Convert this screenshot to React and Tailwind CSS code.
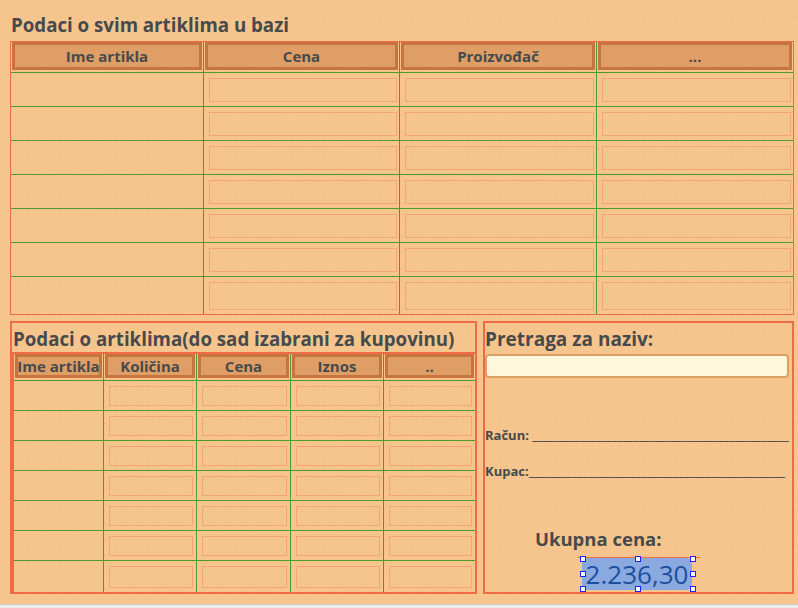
const topCols = [
  { name: 'Ime artikla', w: 'w-[193px]' },
  { name: 'Cena', w: 'w-[196px]' },
  { name: 'Proizvođač', w: 'w-[197px]' },
  { name: '...', w: 'w-[196px]' },
];

const botCols = [
  { name: 'Ime artikla', w: 'w-[90px]' },
  { name: 'Količina', w: 'w-[93px]' },
  { name: 'Cena', w: 'w-[94px]' },
  { name: 'Iznos', w: 'w-[93px]' },
  { name: '..', w: 'w-[91px]' },
];

function HeaderCell({ name, w, last, h }) {
  return (
    <div className={`${w} shrink-0 ${last ? '' : 'border-r'} border-[#4f9a2c] px-[1px] pb-[2px] ${h}`}>
      <div className="flex h-full items-center justify-center whitespace-nowrap border-[3px] border-[#c8743e] bg-[#df9e65] font-bold text-[#474a4c]">
        {name}
      </div>
    </div>
  );
}

function Table({ cols, headerH, headerText, rowH, rows, boxPad }) {
  return (
    <div className="flex h-full flex-col">
      <div className={`flex shrink-0 border-b border-[#4f9a2c] ${headerText}`}>
        {cols.map((c, i) => (
          <HeaderCell key={c.name} name={c.name} w={c.w} h={headerH} last={i === cols.length - 1} />
        ))}
      </div>
      {Array.from({ length: rows }).map((_, r) => (
        <div
          key={r}
          className={`flex ${r === rows - 1 ? 'flex-1' : `${rowH} shrink-0 border-b border-[#4f9a2c]`}`}
        >
          {cols.map((c, i) => (
            <div
              key={c.name}
              className={`${c.w} shrink-0 ${i === cols.length - 1 ? '' : 'border-r'} border-[#4f9a2c] ${boxPad}`}
            >
              {i > 0 && <div className="h-full border border-[#f5a47a]" />}
            </div>
          ))}
        </div>
      ))}
    </div>
  );
}

function Handle() {
  return <div className="h-[6px] w-[6px] border border-[#1c22ff] bg-white" />;
}

export default function App() {
  return (
    <div
      className="flex h-[608px] w-[798px] flex-col overflow-hidden bg-[#f6c58d] bg-[radial-gradient(circle,#e6b884_0.8px,transparent_1px)] bg-[size:11px_11px] text-[#474a4c]"
      style={{ fontFamily: '"Open Sans", "DejaVu Sans", sans-serif' }}
    >
      <div className="flex h-[41px] shrink-0 items-end pb-[6px] pl-[11px] text-[18.7px] font-bold leading-none">
        Podaci o svim artiklima u bazi
      </div>

      <div className="ml-[10px] h-[274px] w-[784px] shrink-0 border border-[#f06a46]">
        <Table
          cols={topCols}
          headerH="h-[30px]"
          headerText="text-[15px]"
          rowH="h-[34px]"
          rows={7}
          boxPad="pl-[5px] pr-[2px] pt-[5px] pb-[4px]"
        />
      </div>

      <div className="mt-[6px] flex h-[273px] shrink-0 gap-[6px] pl-[10px]">
        <div className="flex w-[467px] shrink-0 flex-col border-2 border-[#f06a46]">
          <div className="flex h-[29px] shrink-0 items-end whitespace-nowrap pb-[3px] pl-[1px] text-[18.7px] font-bold leading-none">
            Podaci o artiklima(do sad izabrani za kupovinu)
          </div>
          <div className="flex-1 border-l-2 border-t-2 border-[#f06a46]">
            <Table
              cols={botCols}
              headerH="h-[26px]"
              headerText="text-[15px] leading-none"
              rowH="h-[30px]"
              rows={7}
              boxPad="pl-[5px] pr-[3px] pt-[5px] pb-[4px]"
            />
          </div>
        </div>

        <div className="flex w-[311px] shrink-0 flex-col border-2 border-[#f06a46]">
          <div className="flex h-[29px] shrink-0 items-end pb-[3px] text-[19px] font-bold leading-none">
            Pretraga za naziv:
          </div>
          <div className="mr-[3px] mt-[2px] h-[24px] shrink-0 rounded-[4px] border-2 border-[#dca062] bg-[#fff7dc]" />

          <div className="mt-[51px] whitespace-nowrap text-[13px] font-bold leading-none">
            Račun: ________________________________________________
          </div>
          <div className="mt-[23px] whitespace-nowrap text-[13px] font-bold leading-none">
            Kupac:________________________________________________
          </div>

          <div className="mt-[52px] pl-[50px] text-[18.5px] font-bold leading-none">Ukupna cena:</div>

          <div className="relative mt-[8px] flex-1">
            <div className="absolute left-[93px] top-0 h-px w-[122px] bg-[#f06a46]" />
            <div className="absolute left-[97px] top-[1px] flex h-[32px] w-[110px] items-center justify-center rounded-[6px] bg-[#8aa9e0] text-[26px] leading-none text-[#1d4f9c]">
              2.236,30
            </div>
            <div className="absolute left-[95px] top-[-1px] flex h-[36px] w-[116px] flex-col justify-between">
              <div className="flex justify-between">
                <Handle />
                <Handle />
                <Handle />
              </div>
              <div className="flex justify-between">
                <Handle />
                <Handle />
              </div>
              <div className="flex justify-between">
                <Handle />
                <Handle />
                <Handle />
              </div>
            </div>
          </div>
        </div>
      </div>

      <div className="mt-[10px] flex-1 border-t border-[#c9c9c9] bg-[#ececec]" />
    </div>
  );
}
